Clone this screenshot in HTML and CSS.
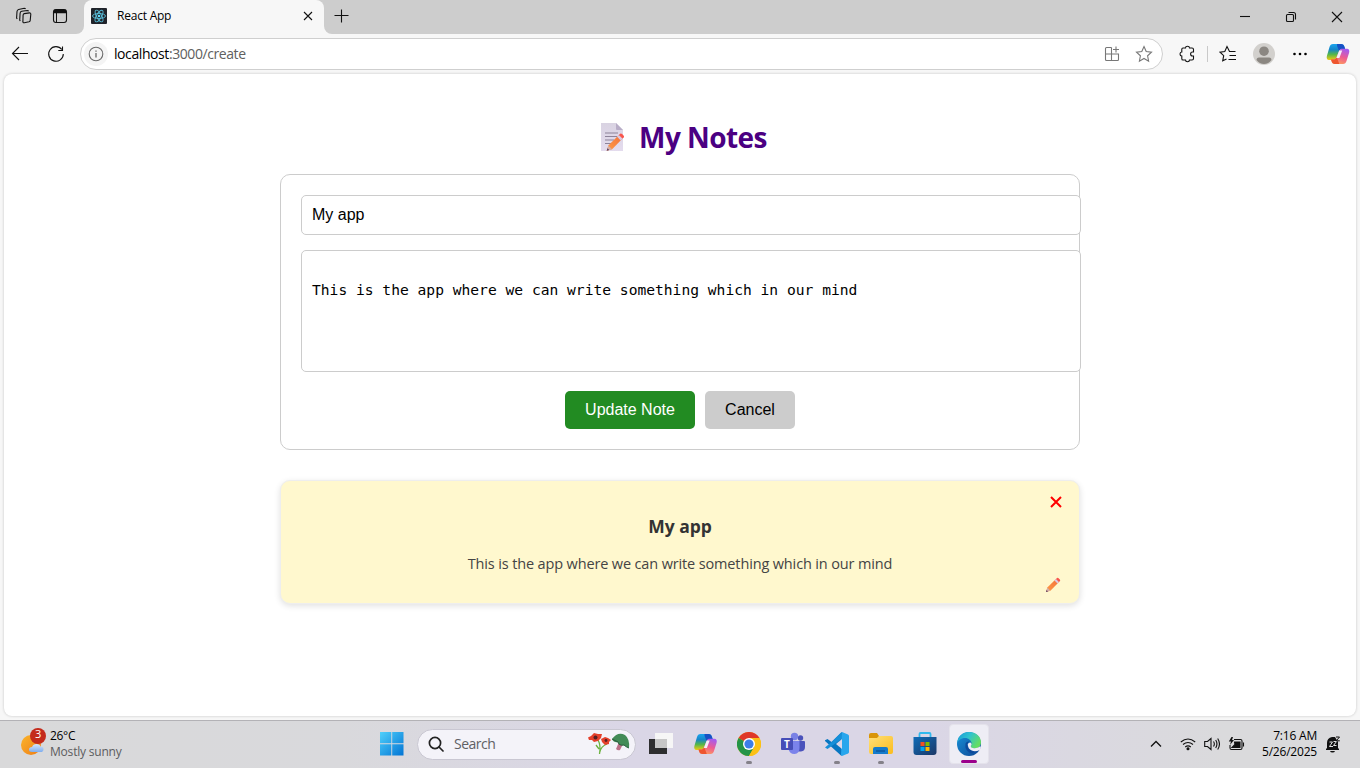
FILE: index.html
```html
<!DOCTYPE html>
<html lang="en">
<head>
<meta charset="utf-8">
<title>React App</title>
<link rel="stylesheet" href="styles.css">
</head>
<body>
<svg class="defs" width="0" height="0" aria-hidden="true">
  <defs>
    <linearGradient id="cpA" x1="0" y1="0" x2="0" y2="1"><stop offset="0" stop-color="#1ba4ee"/><stop offset=".35" stop-color="#1686c8"/><stop offset=".65" stop-color="#55b64a"/><stop offset="1" stop-color="#f0cb10"/></linearGradient>
    <linearGradient id="cpB" x1=".7" y1="0" x2=".3" y2="1"><stop offset="0" stop-color="#a45bf0"/><stop offset=".5" stop-color="#ee5c91"/><stop offset="1" stop-color="#ffa05a"/></linearGradient>
    <linearGradient id="win" x1="0" y1="0" x2="1" y2="1"><stop offset="0" stop-color="#4fd0fb"/><stop offset="1" stop-color="#0274d4"/></linearGradient>
    <linearGradient id="pencil" x1="0" y1="1" x2="1" y2="0"><stop offset="0" stop-color="#ff9c45"/><stop offset="1" stop-color="#f2703c"/></linearGradient>
    <linearGradient id="paper" x1="0" y1="0" x2="0" y2="1"><stop offset="0" stop-color="#d9d3e2"/><stop offset="1" stop-color="#e4dcee"/></linearGradient>
    <linearGradient id="edgeTop" x1="0" y1="0" x2="1" y2=".5"><stop offset="0" stop-color="#1796d8"/><stop offset=".5" stop-color="#2fc3cf"/><stop offset="1" stop-color="#64dd62"/></linearGradient>
    <linearGradient id="edgeLow" x1="0" y1="0" x2="1" y2="1"><stop offset="0" stop-color="#1892da"/><stop offset="1" stop-color="#0d4593"/></linearGradient>
    <linearGradient id="folder" x1="0" y1="0" x2="1" y2="1"><stop offset="0" stop-color="#ffe07a"/><stop offset="1" stop-color="#fbbc1c"/></linearGradient>
    <linearGradient id="store" x1="0" y1="0" x2="1" y2="1"><stop offset="0" stop-color="#0f6cb8"/><stop offset="1" stop-color="#1c3866"/></linearGradient>
    <linearGradient id="sun" x1="0" y1="0" x2="1" y2="1"><stop offset="0" stop-color="#fbb52b"/><stop offset="1" stop-color="#ee7d16"/></linearGradient>
    <linearGradient id="cloud" x1="0" y1="0" x2="0" y2="1"><stop offset="0" stop-color="#d5e6fc"/><stop offset="1" stop-color="#80aeee"/></linearGradient>
    <symbol id="copilot" viewBox="0 0 24 24">
      <path d="M7 2h8c2 0 3 1 3.500 3l.6 2h-3c-1.500 0-2.400.8-2.900 2.400L10.800 15c-.6 2-1.600 3-3.600 3H3C1 18 .3 16 .9 14L3.500 5C4.100 3 5.100 2 7 2z" fill="url(#cpA)"/>
      <path d="M11 2h4c2 0 3 1 3.500 3l.6 2h-3c-1.600 0-2.400.6-3 2l-2-5z" fill="#1751c5"/>
      <path d="M17 22H9c-2 0-3-1-3.500-3L5 17.500h2.200c2 0 3-1 3.600-3L13.200 9c.6-1.600 1.500-2.200 3-2.200H21c2 0 2.700 2 2.100 4L20.500 19c-.6 2-1.600 3-3.500 3z" fill="url(#cpB)"/>
      <path d="M13.300 22H9c-2 0-3-1-3.500-3L5 17.500h2.200c1.800 0 2.900-.7 3.500-2.600z" fill="#ee5630"/>
      <path d="M13.200 8.500h3l-2.800 7.500h-3z" fill="#f5eff8"/>
    </symbol>
    <symbol id="pen" viewBox="0 0 16 16">
      <path d="M1 15l1.300-4.400L11 2l3 3-8.600 8.700z" fill="url(#pencil)"/>
      <path d="M9.500 3.500L11 2l3 3-1.500 1.500z" fill="#d9cbe5"/>
      <path d="M11 2l1-1q.8-.6 1.600.2l1.200 1.200q.8.800.2 1.600L14 5z" fill="#f9564d"/>
      <path d="M1 15l1.300-4.400 3.100 3.100z" fill="#d5b0a8"/><path d="M1 15l.6-2 1.400 1.400z" fill="#533760"/>
    </symbol>
  </defs>
</svg>
<div class="desktop">
  <div class="tabstrip">
    <div class="strip-icons">
      <svg width="20" height="20" viewBox="0 0 20 20" class="line"><path d="M10.200 7.600l5.300-.7q1.400 0 1.300 1.400l-.6 6.200q-.1 1-1.200 1.300l-4.600 1q-1.600.2-1.500-1.400l.2-6.300q.1-1.300 1.100-1.500zM6.300 15l-.6-.8.4-7q.1-1.600 1.600-1.900l5.600-.8q1 0 1.300.8M3.300 12.800l-.7-.8.4-6.500q.1-1.600 1.600-2l5.600-1.200q1 0 1.400.6"/></svg>
      <svg width="20" height="20" viewBox="0 0 20 20" class="line"><rect x="3.500" y="3.500" width="13" height="13" rx="2.500"/><path d="M4 5.500h12" stroke-width="3.500"/><path d="M6.500 6v10" stroke-width="1"/></svg>
    </div>
    <div class="tab">
      <svg width="16" height="16" viewBox="0 0 16 16"><rect width="16" height="16" rx="1" fill="#20232a"/><g fill="none" stroke="#58bdd8" stroke-width=".9"><ellipse cx="8" cy="8" rx="6.500" ry="2.500"/><ellipse cx="8" cy="8" rx="6.500" ry="2.500" transform="rotate(60 8 8)"/><ellipse cx="8" cy="8" rx="6.500" ry="2.500" transform="rotate(120 8 8)"/></g><circle cx="8" cy="8" r="1.300" fill="#61dafb"/></svg>
      <span class="tab-title">React App</span>
      <svg width="10" height="10" viewBox="0 0 10 10" class="line"><path d="M1 1l8 8M9 1L1 9"/></svg>
    </div>
    <div class="strip-rest">
      <svg class="new-tab line" width="16" height="16" viewBox="0 0 16 16"><path d="M8.500 1.500v13M1.500 7.500h14"/></svg>
      <div class="window-controls">
        <svg width="12" height="12" viewBox="0 0 12 12" class="line"><path d="M1 5.500h10"/></svg>
        <svg width="12" height="12" viewBox="0 0 12 12" class="line"><rect x="1.500" y="3.500" width="7" height="7" rx="1"/><path d="M3.500 1.500h5q2 0 2 2v5"/></svg>
        <svg width="12" height="12" viewBox="0 0 12 12" class="line"><path d="M1 1l10 10M11 1L1 11"/></svg>
      </div>
    </div>
  </div>

  <div class="toolbar">
    <svg class="nav-icon line" width="20" height="20" viewBox="0 0 20 20"><path d="M2.500 9.500H18M9 3L2.500 9.500 9 16"/></svg>
    <svg class="nav-icon line" width="20" height="20" viewBox="0 0 20 20"><path d="M15.800 5.500A7.300 7.300 0 1 0 17.300 10M16.500 2.500v4h-4.200"/></svg>
    <div class="address">
      <span class="info"><svg width="16" height="16" viewBox="0 0 16 16" fill="none" stroke="#6a6a6a" stroke-width="1.100"><circle cx="8" cy="8" r="6.800"/><path d="M8 7v4.500M8 4.500v1.300" stroke-width="1.300"/></svg></span>
      <span class="url"><span class="host">localhost</span>:3000/create</span>
      <svg width="16" height="16" viewBox="0 0 16 16" fill="none" stroke="#777" stroke-width="1.100"><path d="M7.500 1.500h-5q-1 0-1 1v11q0 1 1 1h11q1 0 1-1v-5.500h-13M7.500 1.500v13M12 .5v6M9 3.500h6"/></svg>
      <svg width="18" height="18" viewBox="0 0 18 18" fill="none" stroke="#777" stroke-width="1.100"><path d="M9 1.500l2.200 5 5.300.6-3.900 3.700 1 5.400L9 13.500l-4.600 2.700 1-5.400-3.900-3.700 5.300-.6z"/></svg>
    </div>
    <div class="toolbar-actions">
      <svg width="18" height="18" viewBox="0 0 18 18" class="line"><path d="M5 3h2.500q0-1.700 2-1.700t2 1.700H14q1.500 0 1.500 1.500V7h-1q-1.900 0-1.900 2t1.900 2h1v2.500q0 1.500-1.500 1.500h-2.500q0 1.700-2 1.700t-2-1.700H5q-1.200 0-1.200-1.300V11Q2 11 2 9t1.800-2V4.300Q3.800 3 5 3z"/></svg>
      <span class="divider"></span>
      <svg class="favorites line" width="18" height="18" viewBox="0 0 18 18"><path d="M16.500 6.500h-6L8 1.500l-2.200 5-4.800.6 3.700 3.500-1 5.200L7.500 14M10.500 10.500h6.500M9.500 14.500H17"/></svg>
      <svg class="avatar" width="22" height="22" viewBox="0 0 22 22"><circle cx="11" cy="11" r="11" fill="#d2d0cd"/><circle cx="11" cy="8.200" r="4.800" fill="#8b8782"/><path d="M3.500 17q0-2.500 2.500-2.500h10q2.500 0 2.500 2.500Q15.500 21 11 21t-7.500-4z" fill="#8b8782"/></svg>
      <svg class="more" width="16" height="16" viewBox="0 0 16 16"><circle cx="2.500" cy="8" r="1.300"/><circle cx="8" cy="8" r="1.300"/><circle cx="13.500" cy="8" r="1.300"/></svg>
      <svg width="24" height="24"><use href="#copilot"/></svg>
    </div>
  </div>

  <main class="page">
    <h1 class="heading">
      <svg width="26" height="30" viewBox="0 0 26 30"><path d="M1 1h15l7 7v21H1z" fill="url(#paper)"/><path d="M16 1l7 7h-6q-1 0-1-1z" fill="#b8adc7"/><path d="M5 11h13M5 14.500h12M5 18h9M5 21.500h6" stroke="#8d8399" stroke-width="1"/><svg x="5" y="10.500" width="20.500" height="19.500"><use href="#pen"/></svg></svg>
      <span>My Notes</span>
    </h1>
    <section class="note-form">
      <div class="field title-field">My app</div>
      <div class="field content-field"><br>This is the app where we can write something which in our mind</div>
      <div class="buttons"><button class="btn update">Update Note</button><button class="btn cancel">Cancel</button></div>
    </section>
    <article class="note">
      <h2>My app</h2>
      <p>This is the app where we can write something which in our mind</p>
      <svg class="note-delete" width="12" height="12" viewBox="0 0 12 12"><path d="M1 1l10 10M11 1L1 11" stroke="red" stroke-width="2"/></svg>
      <svg class="note-edit" width="16" height="16"><use href="#pen"/></svg>
    </article>
  </main>

  <footer class="taskbar">
    <div class="weather">
      <svg width="28" height="30" viewBox="0 0 28 30"><circle cx="11" cy="18" r="10" fill="url(#sun)"/><path d="M12 25q-3 0-3-2.500T12 20q1-3 4.500-3t4 2.500q3-.2 3 2.700T20.500 25z" fill="url(#cloud)"/><circle cx="18" cy="9" r="8" fill="#c42b1c"/></svg>
      <span class="badge">3</span>
      <div class="weather-text"><span>26°C</span><span class="muted">Mostly sunny</span></div>
    </div>
    <svg class="start" width="24" height="24" viewBox="0 0 24 24"><path d="M0 0h11.300v11.300H0zM12.200 0H23.500v11.300H12.200zM0 12.200h11.300v11.300H0zM12.200 12.200h11.300v11.300H12.200z" fill="url(#win)"/></svg>
    <div class="search">
      <svg width="16" height="16" viewBox="0 0 16 16" fill="none" stroke="#222" stroke-width="1.700"><circle cx="7" cy="7" r="5.600"/><path d="M11 11l4 4" stroke-linecap="round"/></svg>
      <span>Search</span>
      <svg width="44" height="26" viewBox="0 0 44 26"><path d="M11 9q3 5 1.500 14M20 13q-6 2-7.500 9M12 18l-3-4" fill="none" stroke="#6bb23e" stroke-width="1.300"/><path d="M1 6.500l3-1.500 3-3 4 1 4 0-1 4-3 3-4 1-2-2-3 0z" fill="#e4402b"/><path d="M14 8l4-2 3 1 3 2-2 2 0 2-4 1-3-3z" fill="#e4402b"/><circle cx="8.500" cy="6.500" r="2" fill="#541f25"/><circle cx="19" cy="9.500" r="1.400" fill="#541f25"/><path d="M32 11l4 2-3 6q-2 1-4-1z" fill="#bd7088"/><path d="M25 8q6-8 13-4 5 4 4 13-3-1-5-3-5 1-6-3-4 1-6-3z" fill="#438b57"/><path d="M25 8l6 3q1 4 6 3 2 2 5 3" fill="none" stroke="#285c3c"/></svg>
    </div>
    <div class="apps">
      <div class="app"><svg width="24" height="24" viewBox="0 0 24 24"><path d="M0 7h18v15H0z" fill="#2e2e2f"/><path d="M6 1h18v15H6z" fill="#f6f6f6"/><path d="M6 7h12v9H6z" fill="#c6c6c6"/></svg></div>
      <div class="app"><svg width="25" height="24"><use href="#copilot"/></svg></div>
      <div class="app running"><svg width="24" height="24" viewBox="0 0 24 24"><circle cx="12" cy="12" r="12" fill="#fbc116"/><path d="M12 12L1.600 6A12 12 0 0 1 22.400 6z" fill="#df3829"/><path d="M1.600 6A12 12 0 0 0 12 24l5.200-9L12 12z" fill="#249447"/><path d="M22.400 6H12v6l5.200 3L12 24A12 12 0 0 0 22.400 6z" fill="#fbc116"/><circle cx="12" cy="12" r="6" fill="#fff"/><circle cx="12" cy="12" r="4.600" fill="#3c7ee8"/></svg></div>
      <div class="app teams"><svg width="24" height="24" viewBox="0 0 24 24"><circle cx="19.500" cy="6" r="2.700" fill="#4a52ba"/><circle cx="13.500" cy="4.500" r="3.700" fill="#7981e5"/><path d="M17 9h6q1 0 1 1v5q0 4-4 4.500h-3z" fill="#4b53bc"/><path d="M8 9h10.500v7q0 5.500-5 6-5 0-6-5z" fill="#7b83eb"/><rect y="6" width="12" height="12" rx="1" fill="#464eb8"/></svg><span class="teams-letter">T</span></div>
      <div class="app running"><svg width="24" height="24" viewBox="0 0 24 24"><path d="M17 0L6.500 10 2.500 7 0 8.200V9l16.500 15 1.500-5V6z" fill="#0876c1"/><path d="M16.500 0L6.500 10 0 15.500 2.500 17 18 6z" fill="#178fd8"/><path d="M17 0l6 2.500q1 .5 1 1.500v16q0 1-1 1.500L17 24l-1-1z" fill="#28a6ed"/><path d="M11 12l6-5v10z" fill="#dcd7e9"/></svg></div>
      <div class="app running"><svg width="24" height="24" viewBox="0 0 24 24"><path d="M0 3q0-2 2-2h6l2 3-1 3H0z" fill="#d99509"/><path d="M0 6h8l2-2h12q2 0 2 2v14q0 2-2 2H2q-2 0-2-2z" fill="url(#folder)"/><path d="M4 22v-5q0-2 2-2h11q2 0 2 2v5z" fill="#157bcb"/><path d="M7 19h9" stroke="#0d579e" stroke-width="1.500"/></svg></div>
      <div class="app"><svg width="24" height="24" viewBox="0 0 24 24"><path d="M6.500 6V2q0-1 1-1h9q1 0 1 1v4" fill="none" stroke="#31b9ed" stroke-width="1.800"/><path d="M.5 5h23v15q0 3-3 3h-17q-3 0-3-3z" fill="url(#store)"/><path d="M7.500 10h4v4h-4z" fill="#f25022"/><path d="M12.500 10h4v4h-4z" fill="#7fba00"/><path d="M7.500 15h4v4h-4z" fill="#00a4ef"/><path d="M12.500 15h4v4h-4z" fill="#ffb900"/></svg></div>
      <div class="app active"><svg width="24" height="24" viewBox="0 0 24 24"><circle cx="12" cy="12" r="12" fill="url(#edgeLow)"/><path d="M.1 11.500C.5 4.500 5.500 0 12 0c7 0 12 4.700 12 10.200 0 3.800-2.600 6.200-6.200 6.200-3 0-4.200-1-4.200-1.900 0-.6 1-1.200 1-3 0-3-3-5.500-6.600-5.500C4 6 .7 8.700.1 11.500z" fill="url(#edgeTop)"/><path d="M8.500 11.500q-1 7 4.500 9.500 5 1 9.300-3-3 1.500-6 .8-5.300-1.300-6-5.800.3-2.600 2.200-3.500-2.800-.5-4 2z" fill="#0c4a9c"/><path d="M10.800 12.300q.6-1.900 2.600-1.800 1.400.8 1.200 2.200-1.500 1.300-.5 2.600 1.800 1.300 5 .8 2.200-.4 3.600-1.600l1.300.3-1.200 3.200q-4.500 2.100-8 .6-4-1.700-4-6.300z" fill="#eeedf5"/></svg></div>
    </div>
    <div class="tray">
      <svg width="12" height="12" viewBox="0 0 12 12" class="line"><path d="M1 8.500l5-5 5 5" stroke-width="1.300"/></svg>
      <svg class="wifi line" width="16" height="16" viewBox="0 0 16 16"><path d="M.8 6q7.200-6 14.400 0M3 8.500q5-4 10 0M5.200 11q2.800-2.300 5.600 0"/><circle cx="8" cy="12.800" r="1" fill="#111"/></svg>
      <svg class="line" width="16" height="16" viewBox="0 0 16 16"><path d="M.7 5.500H3.500L7 2.500v11L3.500 10.500H.7zM9.500 5.500q1.700 2.500 0 5M11.700 4q2.500 4 0 8M13.700 2.500q3.500 5.500 0 11"/></svg>
      <svg class="line" width="17" height="16" viewBox="0 0 17 16"><path d="M6 3.500h6.500q1.500 0 1.500 1.500v7q0 1.500-1.500 1.500h-9Q2 13.500 2 12V9M15.500 6.500v4"/><path d="M6.500 6h5.500v5.500H4l3-3z" fill="#111"/><path d="M3.500 1L.8 5.500H3L2 9l4-5H4l1-3z" fill="#111" stroke="none"/></svg>
      <div class="clock"><span>7:16 AM</span><span>5/26/2025</span></div>
      <svg width="16" height="17" viewBox="0 0 16 17"><path d="M2 12V7q0-5 5-6h3l3 5v6l1 1v1H1v-1z" fill="#111"/><path d="M5 15h5q-.5 1.500-2.500 1.500T5 15z" fill="#111"/><path d="M4.500 6h3L4.500 10.500H8M8.500 5.500h3l-3 4h3" fill="none" stroke="#e2e2e2" stroke-width="1"/><path d="M11 1h3.500L11.300 4.800h3.500" fill="none" stroke="#111" stroke-width="1"/></svg>
    </div>
  </footer>
</div>
</body>
</html>
```
FILE: styles.css
```css
* { box-sizing: border-box; }
body { margin: 0; font-family: "Open Sans", "Noto Sans", sans-serif; color: #000; overflow: hidden; }
svg { display: block; flex: none; }
.defs { position: absolute; }
.line { fill: none; stroke: #111; stroke-width: 1.1; }
.desktop { width: 1360px; height: 768px; display: flex; flex-direction: column; background: #f7f7f7; }

.tabstrip { height: 34px; background: linear-gradient(#cdcdcd 50%, #f7f7f7 50%); display: flex; align-items: stretch; }
.strip-icons { width: 84px; display: flex; align-items: center; gap: 16px; padding: 0 0 2px 14px; background: #cdcdcd; border-bottom-right-radius: 8px; }
.tab { width: 240px; display: flex; align-items: center; padding: 0 11px 2px 7px; background: #f7f7f7; border-radius: 8px 8px 0 0; }
.tab-title { font-size: 12px; line-height: 16px; letter-spacing: -0.22px; margin: -1px 0 0 10px; flex: 1; }
.strip-rest { flex: 1; display: flex; background: #cdcdcd; border-bottom-left-radius: 8px; }
.new-tab { margin: 8px 0 0 9px; }
.window-controls { margin-left: auto; display: flex; align-items: center; gap: 34px; padding-right: 17px; }

.toolbar { height: 40px; display: flex; align-items: center; }
.nav-icon { margin-left: 10px; }
.nav-icon + .nav-icon { margin-left: 16px; }
.address { width: 1083px; height: 32px; margin-left: 14px; display: flex; align-items: center; padding: 0 9px 0 3px; background: #fff; border: 1px solid #cfcfcf; border-radius: 16px; }
.address svg + svg { margin-left: 15px; }
.info { width: 24px; height: 24px; border-radius: 50%; background: #f4f4f4; display: flex; align-items: center; justify-content: center; }
.url { flex: 1; margin: -1px 0 0 6px; font-size: 14px; letter-spacing: -0.42px; color: #606060; }
.host { color: #000; }
.toolbar-actions { display: flex; align-items: center; margin-left: 15px; }
.divider { width: 1px; height: 16px; background: #c9c9c9; margin: 0 12px 0 11px; }
.favorites { margin-left: -1px; }
.avatar { margin: 0 17px 0 16px; }
.more { margin-right: 18px; }

.page { height: 642px; margin: 0 4px; padding-top: 44px; background: #fff; border-radius: 8px; box-shadow: 0 0 3px rgba(0,0,0,.2); display: flex; flex-direction: column; align-items: center; }
.heading { margin: 0; height: 38px; display: flex; align-items: center; gap: 13px; padding-left: 7px; color: #4b0082; font-size: 28px; line-height: 38px; font-weight: 700; letter-spacing: -0.55px; }
.note-form { width: 800px; height: 276px; margin-top: 18px; padding: 20px; border: 1px solid #ccc; border-radius: 10px; }
.field { width: 780px; padding: 10px; border: 1px solid #ccc; border-radius: 5px; background: #fff; font-size: 16px; }
.title-field { height: 40px; line-height: 18px; font-family: "Liberation Sans", sans-serif; }
.content-field { height: 122px; margin-top: 15px; font-family: "DejaVu Sans Mono", monospace; font-size: 14.61px; line-height: 19px; white-space: pre; }
.buttons { display: flex; justify-content: center; gap: 10px; margin-top: 19px; }
.btn { height: 38px; border: 0; padding: 0 0 1px; border-radius: 5px; font: 16px "Liberation Sans", sans-serif; }
.update { width: 130px; background: #228b22; color: #fff; }
.cancel { width: 90px; background: #ccc; color: #000; }
.note { position: relative; width: 800px; height: 124px; margin-top: 30px; background: #fff8ce; border: 1px solid #eee; border-radius: 10px; box-shadow: 0 2px 6px rgba(0,0,0,.12); text-align: center; color: #333; }
.note h2 { margin: 32px 0 0; font-size: 17.5px; line-height: 26px; letter-spacing: 0; }
.note p { margin: 14px 0 0; font-size: 14.5px; line-height: 22px; color: #444; letter-spacing: -0.14px; }
.note-delete { position: absolute; right: 17px; top: 15px; }
.note-edit { position: absolute; right: 18px; bottom: 10px; }

.taskbar { height: 48px; margin-top: 4px; padding-bottom: 1px; display: flex; align-items: center; border-top: 1px solid #b3b2b6; background: linear-gradient(90deg, #d9d9da 0, #d9d9dc 25%, #dad6e6 46%, #dad6e6 68%, #dadadc 90%); }
.weather { position: relative; width: 380px; padding: 0 0 5px 20px; display: flex; align-items: center; }
.badge { position: absolute; left: 35px; top: 2px; font-size: 11px; line-height: 16px; color: #fff; }
.weather-text { display: flex; flex-direction: column; margin: 4px 0 0 2px; font-size: 12px; line-height: 16px; letter-spacing: -0.3px; }
.weather-text .muted { color: #5c5c5e; letter-spacing: -0.2px; }
.search { width: 219px; height: 31px; margin-left: 13px; padding: 0 4px 0 10px; display: flex; align-items: center; background: #f4f3f9; border: 1px solid #c9c7d2; border-radius: 16px; font-size: 14px; letter-spacing: -0.5px; color: #606064; }
.search span { flex: 1; margin: -1px 0 0 10px; }
.apps { display: flex; margin-left: 5px; gap: 4px; }
.app { position: relative; width: 40px; height: 40px; display: flex; align-items: center; justify-content: center; border-radius: 4px; }
.active { background: #eeedf5; border: 1px solid #e4e2eb; }
.running::after, .active::after { content: ""; position: absolute; bottom: 0; left: 17px; width: 6px; height: 3px; border-radius: 2px; background: #848189; }
.active::after { left: 11px; width: 16px; background: #9b008b; }
.teams-letter { position: absolute; left: 11px; top: 12px; font: 700 10px/16px "Open Sans", sans-serif; color: #fff; }
.tray { margin-left: auto; display: flex; align-items: center; padding-right: 19px; }
.wifi { margin-left: 18px; }
.tray svg + svg:not(.wifi) { margin-left: 8px; }
.clock { width: 72px; margin-right: 8px; display: flex; flex-direction: column; text-align: right; font-size: 12px; line-height: 16px; letter-spacing: -0.2px; }
```
